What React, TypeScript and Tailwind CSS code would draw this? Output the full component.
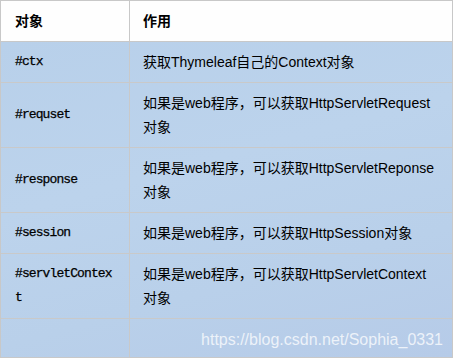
import React from "react";

const rows: { k: string; v: string }[] = [
  { k: "#ctx", v: "获取Thymeleaf自己的Context对象" },
  { k: "#requset", v: "如果是web程序，可以获取HttpServletRequest对象" },
  { k: "#response", v: "如果是web程序，可以获取HttpServletReponse对象" },
  { k: "#session", v: "如果是web程序，可以获取HttpSession对象" },
  { k: "#servletContext", v: "如果是web程序，可以获取HttpServletContext对象" },
];

export default function App() {
  return (
    <div className="relative w-[453px] h-[360px] overflow-hidden bg-white">
      <div
        className="w-[453px] border border-[#c8c8c8] text-black"
        style={{ fontFamily: '"Liberation Sans", "Noto Sans CJK SC", sans-serif' }}
      >
        <div className="grid grid-cols-[129px_1fr] bg-[#fefefe] border-b border-[#c8c8c8]">
          <div className="h-[40px] flex items-center pl-[14px] border-r border-[#c8c8c8] text-[14px] font-bold">对象</div>
          <div className="h-[40px] flex items-center pl-[13px] text-[14px] font-bold">作用</div>
        </div>
        <div className="bg-[linear-gradient(165deg,#b8d0ea_0%,#bcd3ec_40%,#b9d0ea_70%,#b6cbe8_100%)]">
          {rows.map((r) => (
            <div key={r.k} className="grid grid-cols-[129px_1fr] border-b border-[#c9c9c9]">
              <div className="py-[8px] pl-[14px] pr-[14px] border-r border-[#c9c9c9] flex items-center">
                <span
                  className="text-[13px] leading-[24px] tracking-[-0.9px] break-all text-black [-webkit-text-stroke:0.25px_black]"
                  style={{ fontFamily: '"Liberation Mono", "DejaVu Sans Mono", monospace' }}
                >
                  {r.k}
                </span>
              </div>
              <div className="py-[8px] pl-[13px] pr-[15px] text-[14px] leading-[24px]">{r.v}</div>
            </div>
          ))}
          <div className="grid grid-cols-[129px_1fr] h-[38px]">
            <div className="border-r border-[#c9c9c9]"></div>
            <div></div>
          </div>
        </div>
      </div>
      <div
        className="absolute right-[10px] top-[329px] text-[16px] leading-[22px] text-white/75"
        style={{ fontFamily: '"Liberation Sans", Arial, sans-serif' }}
      >
        https://blog.csdn.net/Sophia_0331
      </div>
    </div>
  );
}
